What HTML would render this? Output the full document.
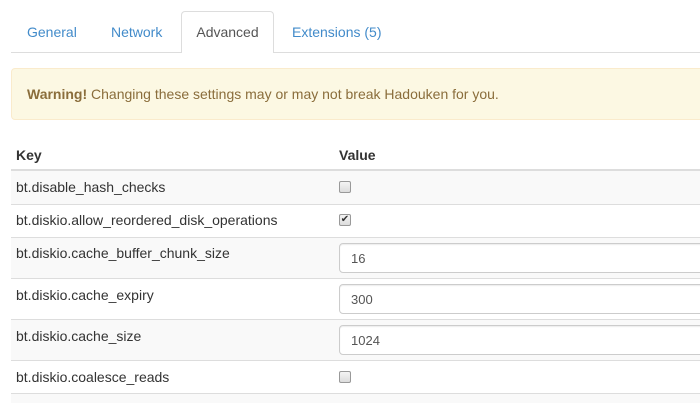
<!DOCTYPE html>
<html><head><style>
*{box-sizing:border-box;margin:0;padding:0}
body{width:700px;height:400px;overflow:hidden;background:#fff;font-family:"Liberation Sans",Arial,sans-serif;font-size:14px;color:#333;position:relative}
.a{position:absolute}
.tabline{left:11px;top:52px;width:700px;height:1px;background:#ddd}
.tab{top:24px;font-size:14px;color:#428bca}
.act{left:181px;top:11px;width:93px;height:42px;border:1px solid #ddd;border-bottom:none;border-radius:4px 4px 0 0;background:#fff;color:#555;font-size:14px;text-align:center;padding-top:12px}
.alert{left:11px;top:68px;width:700px;height:52px;background:#fcf8e3;border:1px solid #faebcc;border-radius:4px;color:#8a6d3b;font-size:14px;padding:17px 15px}
.row{left:11px;width:700px;border-top:1px solid #ddd}
.k{left:16px}
.inp{left:339px;width:380px;height:30px;border:1px solid #ccc;border-radius:4px;background:#fff;box-shadow:inset 0 1px 1px rgba(0,0,0,.075);padding:7px 11px;font-size:13px;color:#555}
.cb{left:339px;width:12px;height:12px;border:1px solid #999;border-radius:2px;background:linear-gradient(#f4f4f4,#dcdcdc)}
</style></head><body>
<div class="a tabline"></div>
<div class="a tab" style="left:27px">General</div>
<div class="a tab" style="left:111px">Network</div>
<div class="a act">Advanced</div>
<div class="a tab" style="left:292px">Extensions (5)</div>
<div class="a alert"><b>Warning!</b> Changing these settings may or may not break Hadouken for you.</div>
<div class="a k" style="top:147px;font-weight:bold">Key</div>
<div class="a" style="left:339px;top:147px;font-weight:bold">Value</div>
<div class="a row" style="top:169px;height:35px;border-top:2px solid #ddd;background:#f9f9f9"></div>
<div class="a row" style="top:204px;height:33px"></div>
<div class="a row" style="top:237px;height:41px;background:#f9f9f9"></div>
<div class="a row" style="top:278px;height:41px"></div>
<div class="a row" style="top:319px;height:41px;background:#f9f9f9"></div>
<div class="a row" style="top:360px;height:33px"></div>
<div class="a row" style="top:393px;height:10px;background:#f9f9f9"></div>
<div class="a k" style="top:179px">bt.disable_hash_checks</div>
<div class="a cb" style="top:181px"></div>
<div class="a k" style="top:212px">bt.diskio.allow_reordered_disk_operations</div>
<div class="a cb" style="top:214px;font-size:10px;line-height:10px;text-align:center;color:#333">✔</div>
<div class="a k" style="top:245px">bt.diskio.cache_buffer_chunk_size</div>
<div class="a inp" style="top:243px">16</div>
<div class="a k" style="top:287px">bt.diskio.cache_expiry</div>
<div class="a inp" style="top:284px">300</div>
<div class="a k" style="top:328px">bt.diskio.cache_size</div>
<div class="a inp" style="top:325px">1024</div>
<div class="a k" style="top:369px">bt.diskio.coalesce_reads</div>
<div class="a cb" style="top:371px"></div>
</body></html>
